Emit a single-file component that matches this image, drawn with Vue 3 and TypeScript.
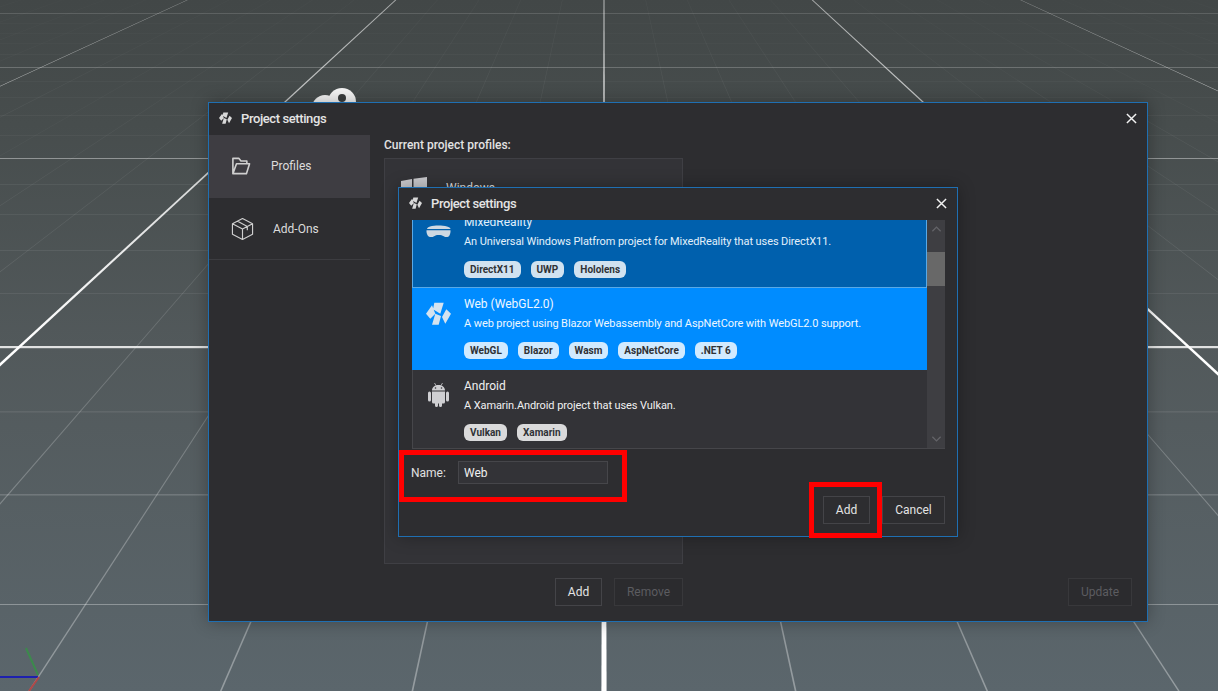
<script setup lang="ts">
interface Profile { name: string; desc: string; tags: string[]; icon: string; state: string }

const VP_X = 604
const VP_Y = -192
const BOTTOM = 691
const DY = BOTTOM - VP_Y
const STEP = 0.217

function wedge(k: number, width: number): string {
  const cx = VP_X + k * STEP * DY
  return `${VP_X},${VP_Y} ${cx - width / 2},${BOTTOM} ${cx + width / 2},${BOTTOM}`
}

const ks: number[] = []
for (let k = -14; k <= 14; k++) ks.push(k)
const minorRays = ks.filter((k) => k % 5 !== 0).map((k) => wedge(k, 1.7))
const majorRays = [-10, 10].map((k) => wedge(k, 3.2))
const whiteRays = [-5, 5].map((k) => wedge(k, 6))
const centre = wedge(0, 5.2)

const rules = [
  { y: 13, h: 1, o: 0.14 }, { y: 23, h: 1, o: 0.02 }, { y: 33, h: 1, o: 0.02 }, { y: 43, h: 1, o: 0.02 },
  { y: 54, h: 1, o: 0.03 }, { y: 67, h: 1, o: 0.22 }, { y: 81, h: 1, o: 0.03 }, { y: 97, h: 1, o: 0.03 },
  { y: 115, h: 1, o: 0.04 }, { y: 135, h: 1, o: 0.04 }, { y: 158, h: 1, o: 0.4 }, { y: 184, h: 1, o: 0.06 },
  { y: 214, h: 1, o: 0.06 }, { y: 250, h: 1, o: 0.07 }, { y: 293, h: 1, o: 0.07 }, { y: 346, h: 2.2, o: 0.82 },
  { y: 411, h: 1.6, o: 0.08 }, { y: 494, h: 1.6, o: 0.16 }, { y: 604, h: 1, o: 0.32 }
]

const profiles: Profile[] = [
  { name: 'MixedReality', desc: 'An Universal Windows Platfrom project for MixedReality that uses DirectX11.', tags: ['DirectX11', 'UWP', 'Hololens'], icon: 'holo', state: 'dim' },
  { name: 'Web (WebGL2.0)', desc: 'A web project using Blazor Webassembly and AspNetCore with WebGL2.0 support.', tags: ['WebGL', 'Blazor', 'Wasm', 'AspNetCore', '.NET 6'], icon: 'logo', state: 'active' },
  { name: 'Android', desc: 'A Xamarin.Android project that uses Vulkan.', tags: ['Vulkan', 'Xamarin'], icon: 'android', state: '' }
]

const logoPath = 'M8.300 .7h9.400L14.300 11.700 7 7.300zM0 11.700L6 3.300 9.300 11.700 4.300 16.700zM16 15L20.300 7.300 25 11.700 19.300 21.700zM9.300 11.700L15 14 12.700 22.700H6z'
</script>

<template>
  <div class="desk">
    <svg class="grid" width="1218" height="691" viewBox="0 0 1218 691" aria-hidden="true">
      <defs>
        <linearGradient id="fadeMinor" gradientUnits="userSpaceOnUse" x1="0" y1="0" x2="0" y2="691">
          <stop offset="0" stop-color="#fff" stop-opacity="0.05" />
          <stop offset="0.35" stop-color="#fff" stop-opacity="0.11" />
          <stop offset="1" stop-color="#fff" stop-opacity="0.36" />
        </linearGradient>
        <linearGradient id="fadeMajor" gradientUnits="userSpaceOnUse" x1="0" y1="0" x2="0" y2="691">
          <stop offset="0" stop-color="#fff" stop-opacity="0.55" />
          <stop offset="0.5" stop-color="#fff" stop-opacity="1" />
        </linearGradient>
      </defs>
      <rect v-for="r in rules" :key="r.y" x="0" :y="r.y" width="1218" :height="r.h" fill="#fff" :fill-opacity="r.o" />
      <polygon v-for="(p, i) in minorRays" :key="'n' + i" :points="p" fill="url(#fadeMinor)" />
      <polygon v-for="(p, i) in majorRays" :key="'m' + i" :points="p" fill="url(#fadeMajor)" />
      <polygon v-for="(p, i) in whiteRays" :key="'w' + i" :points="p" fill="url(#fadeMajor)" />
      <polygon :points="centre" fill="url(#fadeMajor)" />
      <g fill="#f4f4f4">
        <circle cx="325" cy="108" r="13" />
        <circle cx="342" cy="102" r="14" />
      </g>
      <circle cx="342" cy="98" r="4" fill="#3a3d3e" />
      <line x1="0" y1="677" x2="38" y2="677" stroke="#0a0ac4" stroke-width="1.4" />
      <line x1="26" y1="648" x2="38" y2="675" stroke="#3c8a4c" stroke-width="2" />
      <line x1="39" y1="677" x2="29" y2="691" stroke="#b04848" stroke-width="2" />
    </svg>

    <section class="window outer">
      <header class="bar">
        <svg class="mark" viewBox="0 0 25 23" aria-hidden="true"><path :d="logoPath" /></svg>
        <h1>Project settings</h1>
        <svg class="close" viewBox="0 0 12 12" aria-hidden="true"><path d="M1 1l10 10M11 1L1 11" /></svg>
      </header>
      <div class="body">
        <nav class="side">
          <div class="nav current">
            <svg class="nav-icon" viewBox="0 0 22 20" aria-hidden="true">
              <path d="M2 18.5V1.5h6.5l2.5 3h6.5v3M2 18.5h15l3.5-11H6L2 18.5z" />
            </svg>
            <span class="nav-a">Profiles</span>
          </div>
          <div class="nav ruled">
            <svg class="nav-icon box" viewBox="0 0 24 25" aria-hidden="true">
              <path d="M12 1.5l10.5 5.5v11L12 23.5 1.5 18V7zM1.5 7L12 12.5 22.5 7M12 12.5v11M6.500 4.200l10.500 5.600v4" />
            </svg>
            <span class="nav-b">Add-Ons</span>
          </div>
        </nav>
        <main class="content">
          <p class="label">Current project profiles:</p>
          <div class="panel">
            <svg class="win" viewBox="0 0 26 24" aria-hidden="true">
              <path d="M0 4l11-2v10H0zM12.500 1.800L26 0v12H12.500zM0 13.500h11V23L0 21zM12.500 13.500H26V24l-13.500-2z" />
            </svg>
            <span class="win-name">Windows</span>
          </div>
          <div class="actions">
            <div class="left">
              <button class="btn add">Add</button>
              <button class="btn off remove">Remove</button>
            </div>
            <button class="btn off update">Update</button>
          </div>
        </main>
      </div>
    </section>

    <section class="window inner">
      <header class="bar">
        <svg class="mark" viewBox="0 0 25 23" aria-hidden="true"><path :d="logoPath" /></svg>
        <h1>Project settings</h1>
        <svg class="close" viewBox="0 0 12 12" aria-hidden="true"><path d="M1 1l10 10M11 1L1 11" /></svg>
      </header>
      <div class="chooser">
        <div class="rows">
          <article v-for="p in profiles" :key="p.name" class="row" :class="p.state">
            <div class="glyph">
              <svg v-if="p.icon === 'holo'" class="holo" viewBox="0 0 25 13" aria-hidden="true">
                <path d="M4 1.500C9 .3 16 .3 21 1.500c2 .5 3.500 1.500 3.500 2.500L1 4c0-1 1.500-2 3-2.500z" />
                <path d="M.5 5.200h24c.2 3-.8 6.300-3 6.800-2.500.5-4.500-1.300-6-1.800-1.500-.4-4-.4-5.500 0C9 10.700 7 12.500 4 12c-2.500-.5-3.700-3.800-3.500-6.800z" />
              </svg>
              <svg v-else-if="p.icon === 'logo'" class="logo" viewBox="0 0 25 23" aria-hidden="true"><path :d="logoPath" /></svg>
              <svg v-else class="droid" viewBox="0 0 21 25" aria-hidden="true">
                <path d="M4 8.500C4 5 7 3 10.500 3S17 5 17 8.500zM4 9.500h13v10.500a1.500 1.500 0 0 1-1.500 1.500H14v2a1.500 1.500 0 0 1-3 0v-2h-1v2a1.500 1.500 0 0 1-3 0v-2H5.500A1.500 1.500 0 0 1 4 20zM0 11a1.500 1.500 0 0 1 3 0v7a1.500 1.500 0 0 1-3 0zM18 11a1.500 1.500 0 0 1 3 0v7a1.500 1.500 0 0 1-3 0z" />
                <path class="ant" d="M6.500 1l1.500 2.500M14.500 1L13 3.500" />
                <circle cx="7.500" cy="6" r=".8" class="eye" />
                <circle cx="13.500" cy="6" r=".8" class="eye" />
              </svg>
            </div>
            <div class="copy">
              <h2>{{ p.name }}</h2>
              <p>{{ p.desc }}</p>
              <ul>
                <li v-for="t in p.tags" :key="t">{{ t }}</li>
              </ul>
            </div>
          </article>
        </div>
        <div class="scroll">
          <svg viewBox="0 0 12 8" aria-hidden="true"><path d="M1.500 6.500L6 2l4.500 4.500" /></svg>
          <div class="thumb"></div>
          <svg class="down" viewBox="0 0 12 8" aria-hidden="true"><path d="M1.500 1.500L6 6l4.500-4.500" /></svg>
        </div>
      </div>
      <div class="name-row">
        <label for="profile-name">Name:</label>
        <input id="profile-name" value="Web" />
      </div>
      <div class="foot">
        <button class="btn add">Add</button>
        <button class="btn cancel">Cancel</button>
      </div>
    </section>

    <div class="mark-box name-box"></div>
    <div class="mark-box add-box"></div>
  </div>
</template>

<style>
html, body { margin: 0; overflow: hidden; }
</style>

<style scoped>
.desk {
  position: relative;
  width: 1218px;
  height: 691px;
  overflow: hidden;
  font-family: Roboto, "Liberation Sans", sans-serif;
  background: linear-gradient(180deg, #424747 0%, #474d4d 18%, #52595b 50%, #5b666c 100%);
}
.grid { position: absolute; inset: 0; display: block; }
.window {
  position: absolute;
  box-sizing: border-box;
  background: #2d2d30;
  border: 1px solid #1f6fb2;
  box-shadow: 0 0 16px rgba(0, 0, 0, 0.3);
  display: flex;
  flex-direction: column;
  color: #dedede;
}
.outer { left: 208px; top: 102px; width: 940px; height: 520px; }
.inner { left: 398px; top: 187px; width: 560px; height: 350px; }
.bar {
  flex: none;
  height: 32px;
  box-sizing: border-box;
  display: flex;
  align-items: center;
  padding: 0 10px 2px 10px;
}
.bar h1 {
  margin: 0 0 0 9px;
  font-size: 13px;
  font-weight: 500;
  color: #e4e4e4;
  letter-spacing: -0.4px;
  flex: 1;
}
.mark { width: 13px; height: 12px; fill: #d8d8d8; display: block; }
.close { width: 11px; height: 11px; fill: none; stroke: #f2f2f2; stroke-width: 1.6; }
.body { flex: 1; display: flex; min-height: 0; }
.side { width: 161px; flex: none; }
.nav { height: 63px; display: flex; align-items: center; padding-left: 22px; box-sizing: border-box; font-size: 12px; color: #dcdcdc; }
.current { background: #3e3d42; padding-bottom: 2px; }
.ruled { height: 62px; border-bottom: 1px solid #3c3c40; }
.nav-icon { width: 20px; height: 18px; fill: none; stroke: #cfcfcf; stroke-width: 1.8; stroke-linejoin: round; }
.box { width: 23px; height: 24px; stroke-width: 1.2; }
.nav-a { margin-left: 20px; }
.nav-b { margin-left: 19px; }
.content { flex: 1; padding-left: 14px; padding-right: 15px; display: flex; flex-direction: column; min-width: 0; }
.label { margin: 0; height: 23px; line-height: 20px; font-size: 12px; font-weight: 500; color: #e2e2e2; }
.panel {
  box-sizing: border-box;
  width: 299px;
  height: 406px;
  background: #333337;
  border: 1px solid #3f3f44;
  padding: 18px 0 0 16px;
  display: flex;
  align-items: flex-start;
  overflow: hidden;
}
.win { width: 26px; height: 24px; fill: #c8c8cc; flex: none; }
.win-name { margin-left: 19px; font-size: 12px; margin-top: 4px; }
.actions { display: flex; justify-content: space-between; margin-top: 14px; }
.left { width: 299px; display: flex; justify-content: flex-end; gap: 12px; }
.btn {
  box-sizing: border-box;
  height: 28px;
  padding: 0;
  background: #2d2d30;
  border: 1px solid #444448;
  color: #e4e4e4;
  font-family: inherit;
  font-size: 12px;
}
.add { width: 47px; }
.remove { width: 69px; }
.update { width: 64px; }
.off { color: #5c5c60; border-color: #38383b; background: #2b2b2e; }
.chooser {
  flex: none;
  margin: 0 12px 0 13px;
  height: 229px;
  display: flex;
  background: #333337;
  box-sizing: border-box;
  border-bottom: 1px solid #46464a;
  overflow: hidden;
}
.rows { width: 515px; flex: none; box-sizing: border-box; border-left: 1px solid #46464a; }
.row {
  height: 82px;
  box-sizing: border-box;
  margin-left: -1px;
  display: flex;
  color: #f0f0f0;
}
.dim {
  margin-top: -14px;
  background: #0060ad;
  box-shadow: inset 1px 0 #59a9e6, inset -1px 0 #59a9e6, inset 0 -1px #59a9e6;
  color: #e2f0fb;
}
.active { background: #008cff; color: #eef7ff; }
.glyph { width: 52px; flex: none; display: flex; justify-content: center; align-items: flex-start; padding-top: 14px; box-sizing: border-box; }
.logo { width: 25px; height: 23px; fill: #d5e3ef; }
.holo { width: 25px; height: 13px; fill: #cdd8e2; margin-top: 5px; }
.droid { width: 21px; height: 25px; fill: #cfcfd2; margin: -2px 0 0 1px; }
.ant { fill: none; stroke: #cfcfd2; stroke-width: 0.8; }
.eye { fill: #333337; }
.copy { padding-top: 8px; min-width: 0; }
.copy h2 { margin: 0; font-size: 12px; font-weight: 400; line-height: 16px; white-space: nowrap; }
.copy p { margin: 5px 0 0; font-size: 11px; line-height: 14px; white-space: nowrap; letter-spacing: -0.09px; }
.copy ul { list-style: none; margin: 11px 0 0; padding: 0; display: flex; gap: 10px; }
.dim .copy ul { margin-top: 12px; }
.copy li {
  height: 17px;
  line-height: 17px;
  padding: 0 6px;
  border-radius: 6px;
  background: rgba(255, 255, 255, 0.82);
  color: #2f3236;
  font-size: 10px;
  font-weight: 700;
}
.scroll { width: 18px; background: #3e3e42; position: relative; display: flex; flex-direction: column; flex: 1; }
.scroll svg { width: 11px; height: 8px; fill: none; stroke: #636368; stroke-width: 1.4; margin: 5px auto 0; flex: none; }
.thumb { height: 34px; background: #686868; margin-top: 19px; flex: none; }
.scroll .down { margin: auto auto 5px; }
.name-row { display: flex; align-items: center; margin: 12px 0 0 12px; font-size: 12px; color: #e0e0e0; }
.name-row label { width: 47px; flex: none; }
.name-row input {
  box-sizing: border-box;
  width: 150px;
  height: 23px;
  background: #333337;
  border: 1px solid #46464a;
  color: #f0f0f0;
  font: inherit;
  padding: 0 5px;
  outline: none;
}
.foot { display: flex; justify-content: flex-end; gap: 12px; margin: 12px 12px 0 0; }
.cancel { width: 63px; }
.mark-box { position: absolute; box-sizing: border-box; border: 5px solid #f00; }
.name-box { left: 399px; top: 450px; width: 228px; height: 52px; }
.add-box { left: 809px; top: 482px; width: 73px; height: 56px; }
</style>
